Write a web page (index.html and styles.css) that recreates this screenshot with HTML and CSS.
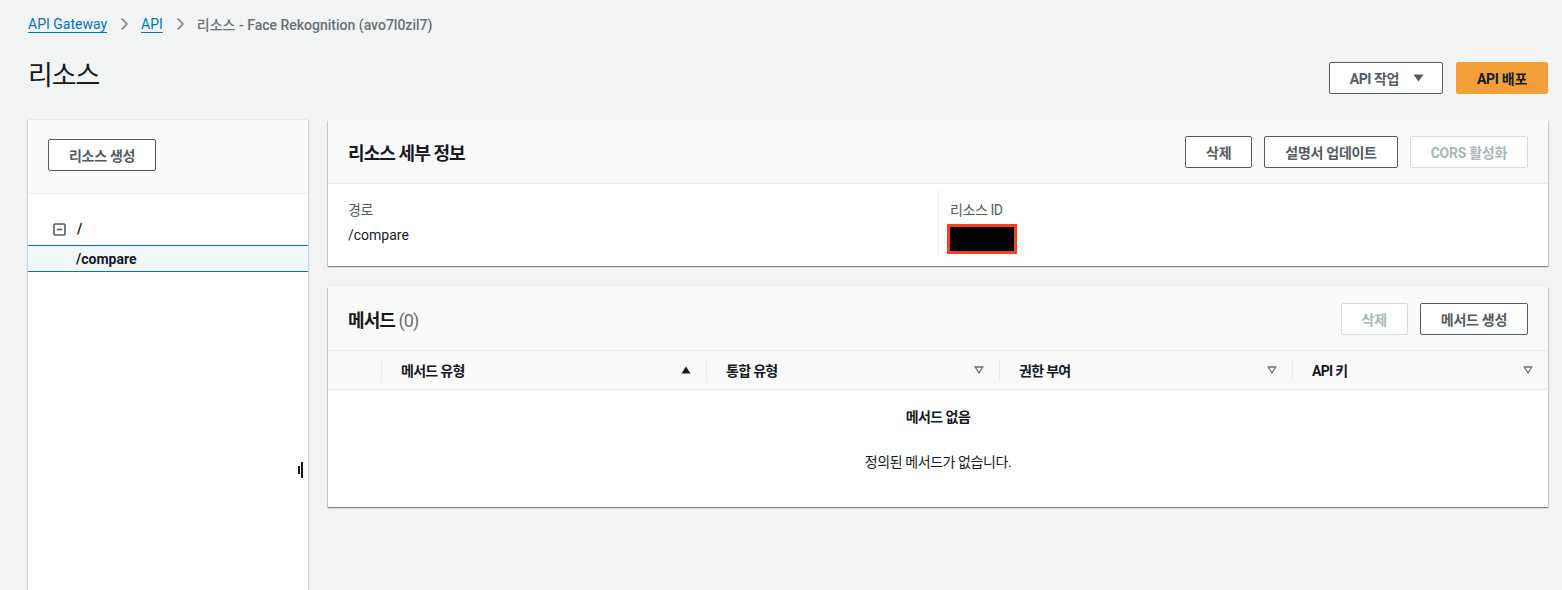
FILE: index.html
```html
<!DOCTYPE html>
<html lang="ko">
<head>
<meta charset="utf-8">
<title>리소스</title>
<link rel="stylesheet" href="styles.css">
</head>
<body>
<div class="page">
  <nav class="crumbs">
    <a class="crumb-link" href="#">API Gateway</a>
    <svg class="chev" width="10" height="14" viewBox="0 0 10 14"><path d="M2.5 1.5l5.5 5.5-5.5 5.5" fill="none" stroke="#687078" stroke-width="1.4"/></svg>
    <a class="crumb-link" href="#">API</a>
    <svg class="chev" width="10" height="14" viewBox="0 0 10 14"><path d="M2.5 1.5l5.5 5.5-5.5 5.5" fill="none" stroke="#687078" stroke-width="1.4"/></svg>
    <span class="crumb-cur">리소스 - Face Rekognition (avo7l0zil7)</span>
  </nav>

  <div class="head">
    <h1 class="title">리소스</h1>
    <div class="actions">
      <button class="btn btn-menu">API 작업 <svg class="caret" width="11" height="8" viewBox="0 0 11 8"><path d="M0.5 0.5h10l-5 7z" fill="#545b64"/></svg></button>
      <button class="btn btn-primary">API 배포</button>
    </div>
  </div>

  <div class="main">
    <aside class="tree-panel">
      <div class="tree-top">
        <button class="btn">리소스 생성</button>
      </div>
      <div class="tree">
        <div class="node root">
          <svg class="toggle" width="13" height="13" viewBox="0 0 13 13"><rect x="1" y="1" width="11" height="11" rx="1" fill="none" stroke="#545b64" stroke-width="1.6"/><path d="M3.8 6.5h5.4" stroke="#545b64" stroke-width="1.6"/></svg>
          <span>/</span>
        </div>
        <div class="node sel"><span>/compare</span></div>
      </div>
      <div class="resizer"><span class="bar-a"></span><span class="bar-b"></span></div>
    </aside>

    <section class="content">
      <div class="card">
        <div class="card-head">
          <h2 class="card-title">리소스 세부 정보</h2>
          <div class="card-actions">
            <button class="btn">삭제</button>
            <button class="btn">설명서 업데이트</button>
            <button class="btn btn-disabled">CORS 활성화</button>
          </div>
        </div>
        <div class="details">
          <div class="col">
            <div class="label">경로</div>
            <div class="value">/compare</div>
          </div>
          <div class="col col-sep">
            <div class="label">리소스 ID</div>
            <div class="redact"></div>
          </div>
        </div>
      </div>

      <div class="card">
        <div class="card-head">
          <h2 class="card-title">메서드 <span class="count">(0)</span></h2>
          <div class="card-actions">
            <button class="btn btn-disabled">삭제</button>
            <button class="btn">메서드 생성</button>
          </div>
        </div>
        <div class="thead">
          <div class="th th-sel"></div>
          <div class="th th-1"><span>메서드 유형</span><svg width="10" height="8" viewBox="0 0 10 8"><path d="M5 0.5l4.5 7h-9z" fill="#16191f"/></svg></div>
          <div class="th th-2"><span>통합 유형</span><svg width="10" height="8" viewBox="0 0 10 8"><path d="M1.2 1h7.6L5 7z" fill="none" stroke="#687078" stroke-width="1.3"/></svg></div>
          <div class="th th-3"><span>권한 부여</span><svg width="10" height="8" viewBox="0 0 10 8"><path d="M1.2 1h7.6L5 7z" fill="none" stroke="#687078" stroke-width="1.3"/></svg></div>
          <div class="th th-4"><span>API 키</span><svg width="10" height="8" viewBox="0 0 10 8"><path d="M1.2 1h7.6L5 7z" fill="none" stroke="#687078" stroke-width="1.3"/></svg></div>
        </div>
        <div class="empty">
          <div class="empty-title">메서드 없음</div>
          <div class="empty-text">정의된 메서드가 없습니다.</div>
        </div>
      </div>
    </section>
  </div>
</div>
</body>
</html>
```

FILE: styles.css
```css
* { box-sizing: border-box; }
html, body { margin: 0; padding: 0; }
body {
  background: #f2f3f3;
  font-family: Roboto, "Noto Sans CJK KR", sans-serif;
  font-size: 14px;
  color: #16191f;
  overflow: hidden;
}
.page {
  padding: 14px 14px 0 28px;
  height: 590px;
  display: flex;
  flex-direction: column;
}
.crumbs {
  display: flex;
  align-items: center;
  height: 20px;
  flex: none;
}
.crumb-link {
  color: #0073bb;
  text-decoration: underline;
  text-underline-offset: 3px;
}
.chev { margin: 0 12px 0 12px; }
.crumb-cur { color: #687078; font-weight: 500; }
.head {
  display: flex;
  align-items: center;
  justify-content: space-between;
  height: 48px;
  margin-top: 20px;
  flex: none;
}
.title {
  margin: 0;
  font-size: 27px;
  font-weight: 400;
  letter-spacing: -0.04em;
  line-height: 32px;
  position: relative;
  top: -2px;
}
.actions { display: flex; gap: 13px; }
.btn {
  font-family: Roboto, "Noto Sans CJK KR", sans-serif;
  font-size: 14px;
  font-weight: 700;
  color: #545b64;
  background: #fff;
  border: 1px solid #545b64;
  border-radius: 2px;
  height: 32px;
  padding: 0 20px;
  letter-spacing: -0.02em;
  cursor: pointer;
  display: inline-flex;
  align-items: center;
  white-space: nowrap;
}
.btn-menu { padding: 0 18px 0 20px; letter-spacing: -0.03em; }
.caret { margin-left: 14px; }
.btn-primary {
  background: #f29f39;
  border-color: #f29f39;
  color: #16191f;
  padding: 0 20px;
}
.btn-disabled {
  color: #aab7b8;
  border-color: #d5dbdb;
  cursor: default;
}
.main {
  display: flex;
  gap: 20px;
  margin-top: 18px;
  flex: 1;
  min-height: 0;
}
.tree-panel {
  position: relative;
  width: 280px;
  flex: none;
  align-self: stretch;
  background: #fff;
  box-shadow: 1px 0 1px 0 rgba(0,28,36,.15), -1px 0 1px 0 rgba(0,28,36,.15);
}
.tree-top {
  height: 74px;
  background: #fafafa;
  border-bottom: 1px solid #eaeded;
  padding: 19px 20px 0;
}
.tree { padding-top: 20px; }
.node {
  display: flex;
  align-items: center;
  font-weight: 700;
  font-size: 14px;
}
.node.root { height: 30px; padding-left: 25px; }
.toggle { margin-right: 11px; }
.node.sel {
  margin-top: 1px;
  height: 27px;
  padding-left: 48px;
  background: #f1f8fd;
  border-top: 1px solid #0073bb;
  border-bottom: 1px solid #0073bb;
}
.resizer {
  position: absolute;
  left: 270px;
  top: 342px;
  width: 6px;
  height: 16px;
}
.bar-a {
  position: absolute; left: 0; top: 4px; width: 2px; height: 8px; background: #16191f;
}
.bar-b {
  position: absolute; left: 3px; top: 0; width: 2px; height: 16px; background: #16191f;
}
.content {
  flex: 1;
  align-self: flex-start;
  display: flex;
  flex-direction: column;
  gap: 21px;
}
.card {
  background: #fff;
  box-shadow: 0 1px 1px 0 rgba(0,28,36,.3), 1px 1px 1px 0 rgba(0,28,36,.15), -1px 1px 1px 0 rgba(0,28,36,.15);
}
.card-head {
  height: 64px;
  background: #fafafa;
  border-bottom: 1px solid #eaeded;
  display: flex;
  align-items: center;
  justify-content: space-between;
  padding: 0 20px;
}
.card-title {
  margin: 0;
  font-size: 18px;
  font-weight: 700;
  letter-spacing: -0.05em;
}
.count { color: #687078; font-weight: 400; }
.card-actions { display: flex; gap: 12px; }
.details {
  display: grid;
  grid-template-columns: 1fr 1fr;
  padding: 6px 20px 10px;
}
.col { padding-top: 10px; height: 66px; }
.col-sep { border-left: 1px solid #eaeded; padding-left: 11px; }
.label {
  color: #545b64;
  font-size: 14px;
  line-height: 20px;
  letter-spacing: -0.03em;
}
.value { line-height: 22px; margin-top: 4px; }
.redact {
  width: 70px;
  height: 30px;
  margin-top: 4px;
  margin-left: -3px;
  border: 3px solid #ee4423;
  background: #000;
}
.thead {
  display: flex;
  height: 39px;
  background: #fafafa;
  border-bottom: 1px solid #eaeded;
  align-items: center;
}
.th {
  height: 39px;
  display: flex;
  align-items: center;
  justify-content: space-between;
  padding: 0 15px 0 20px;
  font-weight: 700;
  font-size: 14px;
  letter-spacing: -0.05em;
  position: relative;
}
.th + .th::before {
  content: "";
  position: absolute;
  left: 0;
  top: 9px;
  height: 21px;
  width: 1px;
  background: #eaeded;
}
.th-sel { width: 53px; padding: 0; }
.th-1 { width: 325px; }
.th-2 { width: 293px; }
.th-3 { width: 293px; }
.th-4 { flex: 1; padding-right: 15px; }
.empty {
  height: 117px;
  text-align: center;
  padding-top: 16px;
}
.empty-title { font-weight: 700; line-height: 22px; letter-spacing: -0.04em; }
.empty-text { line-height: 22px; margin-top: 23px; letter-spacing: -0.03em; }
```
